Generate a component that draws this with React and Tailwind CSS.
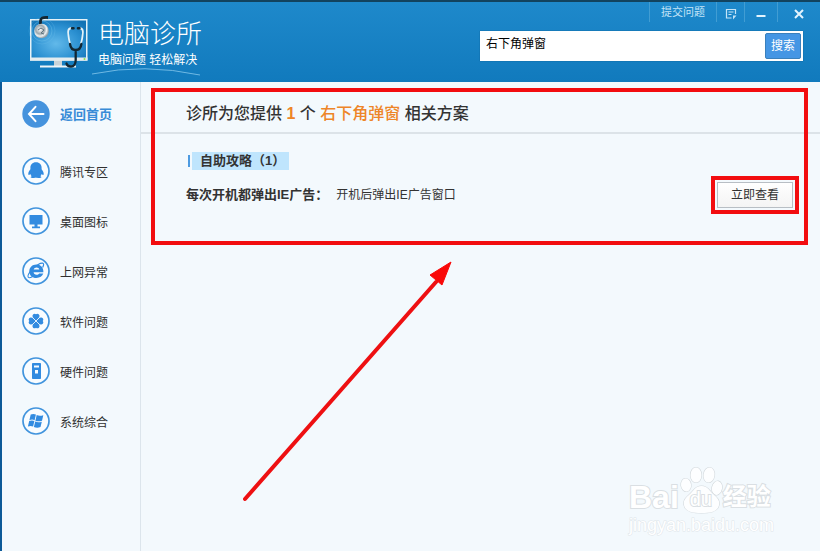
import { useState } from "react";

const menu = [
  { label: "腾讯专区", icon: <PenguinIcon /> },
  { label: "桌面图标", icon: <DesktopIcon /> },
  { label: "上网异常", icon: <BrowserIcon /> },
  { label: "软件问题", icon: <CloverIcon /> },
  { label: "硬件问题", icon: <TowerIcon /> },
  { label: "系统综合", icon: <WindowsIcon /> },
];

function Ring({ children }) {
  return (
    <svg viewBox="0 0 28 28" className="size-7 shrink-0" aria-hidden="true" fill="#328be0">
      <circle cx="14" cy="14" r="13" fill="#f8fcff" stroke="#4194dd" strokeWidth="1.7" />
      {children}
    </svg>
  );
}

function PenguinIcon() {
  return (
    <Ring>
      <path d="M14 5.2c-3.7 0-5.7 2.5-5.600 5.600v1.400c-1.300 1.400-2.300 3.400-2.100 5 .1 1.200 1 .9 2 -.2.3 1 .8 1.600 1.400 2.200-.8.300-1.100.7-1.100 1.100 0 .8 4.400.9 5.400.2 1 .7 5.400.6 5.400-.2 0-.4-.3-.8-1.100-1.100.6-.6 1.100-1.200 1.400-2.200 1 1.100 1.900 1.400 2 .2.2-1.600-.8-3.600-2.100-5v-1.400c.1-3.100-1.900-5.600-5.600-5.600z" />
    </Ring>
  );
}

function DesktopIcon() {
  return (
    <Ring>
      <path d="M7.500 8h13v9.500H15.500v2h2.500v1.800h-8v-1.800h2.500v-2h-5z" />
    </Ring>
  );
}

function BrowserIcon() {
  return (
    <Ring>
      <path
        fillRule="evenodd"
        d="M17.200 16.500h4.100c-.9 2.700-3.500 4.400-6.900 4.400-4.300 0-7.100-2.700-7.100-6.500 0-3.900 3-6.800 7.100-6.800 4.300 0 7.200 3 7 7.600h-9.800c.1 1.500 1.200 2.500 2.900 2.500 1.300 0 2.100-.4 2.700-1.200zm-5.500-4h5.600c-.2-1.300-1.200-2.100-2.700-2.100s-2.700.8-2.900 2.100z"
      />
      <path
        d="M20.600 10.500c1.300-2.500 1.400-4 0-4.300-2-.4-6.500 1.900-9.800 5.500-3.600 3.900-5.600 7.600-4.500 8.700.8.700 2.200.3 4-.7"
        fill="none"
        stroke="#328be0"
        strokeWidth="1.200"
      />
    </Ring>
  );
}

function CloverIcon() {
  const leaf = "M14 13.800c-1.700-1.300-3.800-3.200-3.500-5.200.3-1.900 2.500-2.600 3.500-1.300 1-1.300 3.200-.6 3.500 1.300.3 2-1.800 3.900-3.500 5.200z";
  return (
    <Ring>
      <path d={leaf} />
      <path d={leaf} transform="rotate(90 14 14)" />
      <path d={leaf} transform="rotate(180 14 14)" />
      <path d={leaf} transform="rotate(270 14 14)" />
      <path d="M10.500 10.500l7 7m0-7l-7 7" stroke="#f8fcff" strokeWidth="0.800" />
    </Ring>
  );
}

function TowerIcon() {
  return (
    <Ring>
      <rect x="10" y="6" width="9" height="16" rx="0.800" />
      <rect x="12" y="8.500" width="5" height="2" fill="#f8fcff" />
      <rect x="13" y="13" width="3" height="3.500" fill="#f8fcff" />
    </Ring>
  );
}

function WindowsIcon() {
  return (
    <Ring>
      <path d="M8.700 7.600c1.900-.9 3.500-.8 5.200 0l-1.300 5.600c-1.700-.8-3.300-.8-5.200 0z" />
      <path d="M14.700 8.100c1.900.9 4.100 1 6.600.1l-1.300 5.500c-2.400.8-4.700.7-6.600 0z" />
      <path d="M7.200 14.100c1.900-.8 3.500-.8 5.200 0l-1.300 5.500c-1.700-.9-3.300-.9-5.200 0z" />
      <path d="M13.200 14.600c1.900.8 4.200.9 6.600.1l-1.300 5.400c-2.400.9-4.700.8-6.600-.1z" />
    </Ring>
  );
}

function BackIcon() {
  return (
    <svg viewBox="0 0 28 28" className="size-7 shrink-0" fill="none" aria-hidden="true">
      <circle cx="14" cy="14" r="13.700" fill="#4593dd" />
      <path d="M13.500 6.800L7 14l6.500 7.200M7.300 14H21.500" stroke="#fff" strokeWidth="2" strokeLinecap="round" />
    </svg>
  );
}

function Logo() {
  return (
    <svg viewBox="0 0 62 56" className="mt-0.5 h-14 w-[62px] shrink-0" fill="none" aria-hidden="true">
      <defs>
        <radialGradient id="screen" cx="0.45" cy="0.6" r="0.7">
          <stop offset="0" stopColor="#62b9ea" />
          <stop offset="0.600" stopColor="#2c91d2" />
          <stop offset="1" stopColor="#1273b5" />
        </radialGradient>
        <radialGradient id="metal" cx="0.4" cy="0.4" r="0.6">
          <stop offset="0" stopColor="#fff" />
          <stop offset="0.500" stopColor="#9ba7ad" />
          <stop offset="0.750" stopColor="#eef1f2" />
          <stop offset="1" stopColor="#8f9da5" />
        </radialGradient>
      </defs>
      <path d="M26 46h8v6h-8z" fill="#c9d3d8" />
      <path d="M12 51.500h36v2H12z" fill="#eef5f8" />
      <rect x="2.750" y="5.750" width="56" height="40" fill="url(#screen)" stroke="#e6f2f8" strokeWidth="1.500" />
      <path d="M2 43.500h57.500v3.200H2z" fill="#e4ecef" />
      <g stroke="#70c2ec" strokeOpacity="0.400">
        <circle cx="14" cy="17" r="10" />
        <circle cx="14" cy="17" r="13" opacity="0.600" />
      </g>
      <path d="M12.500 12V7c0-3 2-3.800 7.500-3.500" stroke="#142631" strokeWidth="2.800" />
      <circle cx="13.500" cy="17" r="7.300" fill="url(#metal)" />
      <path d="M10 16l3-2 3 2-3 3 3 1" stroke="#617580" />
      <circle cx="56.500" cy="45" r="1" fill="#85e34e" />
      <path
        d="M44 14c-4 0-4.500 3-3.500 8 .5 4 .8 6 2 8m8.500-16c4 0 4.500 3 3.500 8-.5 4-.8 6-2 8"
        stroke="#e4f2f8"
        strokeWidth="1.800"
      />
      <path
        d="M42 30c.5 4 2.500 6 5.700 6s5.200-2 5.700-6M47.700 36v10c0 4-2 6.500-4.700 6.500-2.300 0-4-1-4.500-3"
        stroke="#122733"
        strokeWidth="2.300"
        strokeLinecap="round"
      />
      <path d="M44 14.200h1.500m4.500 0h1.500" stroke="#122733" strokeWidth="2.500" strokeLinecap="round" />
    </svg>
  );
}

function Header({ query, setQuery }) {
  return (
    <header className="flex h-[82px] justify-between border-t-2 border-[#12435f] bg-linear-to-b from-[#1e89cb] to-[#117abd] text-white">
      <div className="flex items-start gap-2 pt-2.5 pl-7">
        <Logo />
        <div className="flex flex-col pt-0.5">
          <h1 className="text-[26px] leading-10 font-light">电脑诊所</h1>
          <p className="-mt-0.5 text-xs leading-4">电脑问题 轻松解决</p>
          <svg viewBox="0 0 112 8" className="-ml-2 h-2 w-28" fill="none" aria-hidden="true">
            <path d="M2 6Q54-5 110 7" stroke="#6fb9e4" />
          </svg>
        </div>
      </div>

      <div className="flex flex-col items-end">
        <div className="flex h-5 text-[11px] text-[#c4e4f7]">
          <a href="#submit" className="flex w-[67px] items-center justify-center border-l border-[#419dd3]">
            提交问题
          </a>
          <button aria-label="菜单" className="flex w-7 items-center justify-center border-l border-[#419dd3]">
            <svg viewBox="0 0 12 12" className="mt-1 size-3" fill="none" stroke="currentColor" strokeWidth="1.200">
              <path d="M6.500 10H1.500V1.500H10.500V6M3.500 4H8.500M3.500 6.500H6.500" />
              <path d="M7.500 7.500H11.500L8 11.500V7.500" fill="currentColor" stroke="none" />
            </svg>
          </button>
          <button aria-label="最小化" className="flex w-[33px] items-center justify-center border-l border-[#419dd3]">
            <svg viewBox="0 0 12 12" className="mt-1 size-3" stroke="#e3f4fe" strokeWidth="2">
              <path d="M1.500 8H10.500" />
            </svg>
          </button>
          <button aria-label="关闭" className="flex w-[43px] items-center justify-center border-l border-[#419dd3]">
            <svg viewBox="0 0 12 12" className="mt-1 size-3" stroke="#e3f4fe" strokeWidth="2">
              <path d="M2 2L10 10M10 2L2 10" />
            </svg>
          </button>
        </div>

        <form
          className="mt-[9px] mr-[17px] flex h-[30px] w-[323px] bg-white p-0.5 shadow-[0_0_1px_#0b5383]"
          onSubmit={(e) => e.preventDefault()}
        >
          <input
            aria-label="搜索问题"
            value={query}
            onChange={(e) => setQuery(e.target.value)}
            className="min-w-0 flex-1 bg-white px-1 pb-1 text-xs text-black outline-none"
          />
          <button type="submit" className="w-9 shrink-0 rounded-xs border border-[#3a80bc] bg-[#4596e4] text-xs">
            搜索
          </button>
        </form>
      </div>
    </header>
  );
}

function Sidebar() {
  return (
    <nav className="w-[139px] shrink-0 border-r border-[#dce5ec] pt-[18px] pl-5">
      <a href="#home" className="flex items-center gap-2.5 text-[13px] font-bold text-[#388bd7]">
        <BackIcon />
        <span className="pt-0.5">返回首页</span>
      </a>
      <ul className="mt-[29px] flex flex-col gap-[22px]">
        {menu.map((item) => (
          <li key={item.label}>
            <a href="#list" className="flex items-center gap-2.5 text-xs text-[#303030]">
              {item.icon}
              <span className="pt-1">{item.label}</span>
            </a>
          </li>
        ))}
      </ul>
    </nav>
  );
}

function Watermark() {
  return (
    <div className="absolute right-11 bottom-4 w-[147px] text-white [paint-order:stroke_fill] [-webkit-text-stroke:2px_#dadfe3]">
      <div className="flex items-end">
        <span className="text-[32px] leading-9 font-bold">Bai</span>
        <div className="relative h-[51px] w-11 shrink-0">
          <svg viewBox="0 0 44 51" className="size-full" fill="#fdfeff" stroke="#d3d9dd" strokeWidth="1.200" aria-hidden="true">
            <ellipse cx="7" cy="21" rx="5" ry="6.500" transform="rotate(-8 7 21)" />
            <ellipse cx="17" cy="11" rx="5.500" ry="7.500" />
            <ellipse cx="30" cy="11" rx="5.500" ry="7.500" transform="rotate(8 30 11)" />
            <ellipse cx="38" cy="24" rx="5" ry="7" transform="rotate(12 38 24)" />
            <path d="M22.500 22c-6 0-7.500 4-10.500 7-4 4-8 6-7 12 1 6 7 8 17.500 8s16.500-2 17.500-8c1-6-3-8-7-12-3-3-4.500-7-10.500-7z" />
          </svg>
          <span className="absolute inset-x-0 bottom-1 text-center text-xl leading-6">du</span>
        </div>
        <span className="text-2xl leading-9 font-bold">经验</span>
      </div>
      <p className="text-lg leading-5 [-webkit-text-stroke:1px_#e0e5e9]">jingyan.baidu.com</p>
    </div>
  );
}

export default function App() {
  const [query, setQuery] = useState("右下角弹窗");

  return (
    <div className="flex min-h-screen flex-col bg-[#f3f9fd] font-['Liberation_Sans','Noto_Sans_CJK_SC',sans-serif]">
      <Header query={query} setQuery={setQuery} />

      <div className="flex flex-1 border-l-2 border-[#0d5a98]">
        <Sidebar />

        <main className="relative min-w-0 flex-1 text-[#333]">
          <h2 className="border-b-2 border-[#dce3e8] pt-5 pb-1.5 pl-[45px] text-base leading-6 font-medium">
            诊所为您提供 <span className="font-bold text-[#ee8528]">1</span> 个{" "}
            <span className="text-[#ee8528]">右下角弹窗</span> 相关方案
          </h2>

          <section className="pt-[18px] pr-[27px] pl-[45px]">
            <h3 className="flex items-center gap-0.5 pl-0.5 text-[13px] font-bold">
              <span className="h-3 w-0.5 bg-[#4d9be1]" />
              <span className="bg-[#bfe5fd] pr-1 pl-2 leading-[18px]">自助攻略（1）</span>
            </h3>
            <div className="mt-3 flex items-center justify-between">
              <p className="text-xs">
                <b className="mr-2 text-[13px]">每次开机都弹出IE广告：</b>
                开机后弹出IE广告窗口
              </p>
              <div className="relative">
                <button className="block h-[26px] w-[76px] border border-[#b8bec4] bg-linear-to-b from-white to-[#f4f4f4] text-xs">
                  立即查看
                </button>
                <div className="pointer-events-none absolute -inset-1.5 border-4 border-[#f20d10]" />
              </div>
            </div>
          </section>

          {/* callout frame and arrow */}
          <div className="pointer-events-none absolute top-1.5 right-3 left-2.5 h-[157px] border-4 border-[#f20d10]" />
          <svg
            viewBox="0 0 210 242"
            className="pointer-events-none absolute top-[178px] left-[101px] h-[242px] w-[210px]"
            aria-hidden="true"
          >
            <path d="M3 239L194 22" stroke="#ee1012" strokeWidth="4" strokeLinecap="round" />
            <path d="M209 2L188 15L200 25Z" fill="#f90909" stroke="#f90909" />
          </svg>

          <Watermark />
        </main>
      </div>
    </div>
  );
}
